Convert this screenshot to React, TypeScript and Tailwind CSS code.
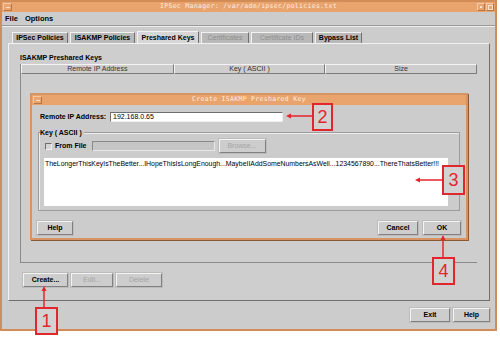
import React from "react";

const btn =
  "flex items-center justify-center h-[14px] bg-[#cdcdcd] border border-t-[#f4f4f4] border-l-[#f4f4f4] border-b-[#808080] border-r-[#808080] shadow-[0_0_0_1px_#bcbcbc] text-[7px] font-bold";

function Button({
  label,
  width,
  disabled,
}: {
  label: string;
  width: string;
  disabled?: boolean;
}) {
  return (
    <div className={`${btn} ${width} ${disabled ? "text-[#a4a4a4] font-normal" : "text-black"}`}>
      {label}
    </div>
  );
}

function Tab({
  label,
  width,
  active,
  disabled,
}: {
  label: string;
  width: string;
  active?: boolean;
  disabled?: boolean;
}) {
  return (
    <div
      className={`flex items-center justify-center text-[7px] font-bold border-t border-l border-r border-t-[#f2f2f2] border-l-[#f2f2f2] border-r-[#6f6f6f] ${width} ${
        active ? "h-[13px] bg-[#d6d6d6] -mb-px" : "h-[11px] bg-[#b9b9b9]"
      } ${disabled ? "text-[#8e8e8e] font-normal" : "text-black"}`}
    >
      {label}
    </div>
  );
}

function Callout({ n, className }: { n: string; className: string }) {
  return (
    <div
      className={`absolute flex items-center justify-center border-2 border-[#e3262d] bg-[#d2d2d2] text-[#e3262d] text-[18px] leading-none ${className}`}
    >
      {n}
    </div>
  );
}

function TitleBar({ title, small }: { title: string; small?: boolean }) {
  return (
    <div className="relative flex items-center justify-center h-[10px] bg-[#e9a36c]">
      <div className="absolute left-[1px] top-[1px] w-[9px] h-[8px] border border-t-[#f6c9a4] border-l-[#f6c9a4] border-b-[#b87544] border-r-[#b87544] flex items-center justify-center">
        <div className="w-[4px] h-px bg-[#f8e2cf]" />
      </div>
      <span className="font-['DejaVu_Sans_Mono',monospace] text-[6.5px] tracking-[0.3px] text-[#fbeee0]">
        {title}
      </span>
      {!small && (
        <div className="absolute right-[1px] top-[1px] flex gap-px">
          <div className="w-[8px] h-[8px] border border-t-[#f6c9a4] border-l-[#f6c9a4] border-b-[#b87544] border-r-[#b87544] flex items-center justify-center">
            <div className="w-[2px] h-[2px] bg-[#f8e2cf]" />
          </div>
          <div className="w-[8px] h-[8px] border border-t-[#f6c9a4] border-l-[#f6c9a4] border-b-[#b87544] border-r-[#b87544] flex items-center justify-center">
            <div className="w-[5px] h-[5px] border border-[#f8e2cf]" />
          </div>
        </div>
      )}
    </div>
  );
}

export default function App() {
  return (
    <div className="relative w-[500px] h-[340px] bg-white font-['Liberation_Sans',Arial,sans-serif] text-black">
      <div className="w-[497px] h-[331px] border-2 border-[#d28c58] bg-[#cccccc] flex flex-col">
        <TitleBar title="IPSec Manager: /var/adm/ipsec/policies.txt" />

        <div className="flex items-center gap-[7px] h-[13px] pl-[3px] text-[7.5px] font-bold">
          <span>File</span>
          <span>Options</span>
        </div>
        <div className="h-px bg-[#9a9a9a]" />
        <div className="h-px bg-[#ededed]" />

        <div className="flex items-end gap-[2px] h-[12px] mt-[4px] pl-[10px]">
          <Tab label="IPSec Policies" width="w-[56px]" />
          <Tab label="ISAKMP Policies" width="w-[65px]" />
          <Tab label="Preshared Keys" width="w-[62px]" active />
          <Tab label="Certificates" width="w-[48px]" disabled />
          <Tab label="Certificate IDs" width="w-[62px]" disabled />
          <Tab label="Bypass List" width="w-[47px]" />
        </div>

        <div className="ml-[6px] w-[482px] h-[258px] bg-[#cecece] border border-t-[#f2f2f2] border-l-[#f2f2f2] border-r-[#6f6f6f] border-b-[#6f6f6f] flex flex-col">
          <div className="h-[10px] mt-[9px] pl-[11px] text-[7px] font-bold leading-[10px]">
            ISAKMP Preshared Keys
          </div>

          <div className="ml-[11px] mt-px w-[457px] h-[199px] border-l border-b border-[#8a8a8a] flex flex-col">
            <div className="flex h-[10px] text-[7px] text-[#333]">
              <div className="w-[153px] flex items-center justify-center border border-t-[#f4f4f4] border-l-[#f4f4f4] border-b-[#7c7c7c] border-r-[#7c7c7c]">
                Remote IP Address
              </div>
              <div className="w-[152px] flex items-center justify-center border border-t-[#f4f4f4] border-l-[#f4f4f4] border-b-[#7c7c7c] border-r-[#7c7c7c]">
                Key ( ASCII )
              </div>
              <div className="w-[152px] flex items-center justify-center border border-t-[#f4f4f4] border-l-[#f4f4f4] border-b-[#7c7c7c] border-r-[#7c7c7c]">
                Size
              </div>
            </div>

            {/* modal dialog */}
            <div className="mt-[19px] ml-[9px] w-[438px] h-[147px] border-2 border-[#d79462] bg-[#cccccc] shadow-[1px_1px_0_#8a5a36] flex flex-col">
              <TitleBar title="Create ISAKMP Preshared Key" small />

              <div className="flex items-center h-[10px] mt-[7px] pl-[8px]">
                <span className="w-[70px] text-[7px] font-bold">Remote IP Address:</span>
                <div className="w-[173px] h-[10px] bg-white border border-t-[#6f6f6f] border-l-[#6f6f6f] border-b-[#eeeeee] border-r-[#eeeeee] text-[7px] leading-[8px] pl-[2px] text-black">
                  192.168.0.65
                </div>
              </div>

              <div className="relative mt-[10px] ml-[6px] w-[422px] h-[79px] border border-[#9c9c9c] shadow-[inset_1px_1px_0_#eeeeee]">
                <span className="absolute -top-[5px] left-[1px] bg-[#cccccc] pr-[2px] text-[7px] font-bold leading-[9px]">
                  Key ( ASCII )
                </span>
                <div className="flex items-center h-[12px] mt-[7px] pl-[6px]">
                  <div className="w-[7px] h-[7px] border border-t-[#6f6f6f] border-l-[#6f6f6f] border-b-[#f0f0f0] border-r-[#f0f0f0] bg-[#d4d4d4]" />
                  <span className="ml-[3px] text-[7px] font-bold">From File</span>
                  <div className="ml-[5px] w-[123px] h-[10px] bg-[#c6c6c6] border border-t-[#8a8a8a] border-l-[#8a8a8a] border-b-[#e8e8e8] border-r-[#e8e8e8]" />
                  <div className="ml-[4px]">
                    <Button label="Browse..." width="w-[47px]" disabled />
                  </div>
                </div>
                <div className="mt-[6px] ml-[5px] w-[404px] h-[48px] bg-white pl-[1px] pt-[1px] text-[6.9px] leading-[9px] text-black whitespace-nowrap overflow-hidden">
                  TheLongerThisKeyIsTheBetter...IHopeThisIsLongEnough...MaybeIIAddSomeNumbersAsWell...1234567890...ThereThatsBetter!!!
                </div>
              </div>

              <div className="flex items-center mt-[10px] px-[5px]">
                <Button label="Help" width="w-[36px]" />
                <div className="ml-auto flex gap-[5px]">
                  <Button label="Cancel" width="w-[40px]" />
                  <Button label="OK" width="w-[38px]" />
                </div>
              </div>
            </div>
          </div>

          <div className="flex gap-[3px] mt-[10px] ml-[14px]">
            <Button label="Create..." width="w-[45px]" />
            <Button label="Edit..." width="w-[42px]" disabled />
            <Button label="Delete" width="w-[46px]" disabled />
          </div>
        </div>

        <div className="flex justify-end gap-[3px] mt-[7px] pr-[5px]">
          <Button label="Exit" width="w-[40px]" />
          <Button label="Help" width="w-[37px]" />
        </div>
      </div>

      {/* callout arrows */}
      <svg className="absolute left-0 top-0 pointer-events-none" width="500" height="340">
        <g stroke="#e3262d" strokeWidth="1.5" fill="#e3262d">
          <line x1="44" y1="307" x2="44" y2="290" />
          <polygon points="44,286 41.5,291 46.5,291" stroke="none" />
          <line x1="312" y1="116" x2="290" y2="116" />
          <polygon points="286,116 291,113.5 291,118.5" stroke="none" />
          <line x1="442" y1="180" x2="419" y2="180" />
          <polygon points="415,180 420,177.5 420,182.5" stroke="none" />
          <line x1="443" y1="257" x2="443" y2="239" />
          <polygon points="443,235 440.5,240 445.5,240" stroke="none" />
        </g>
      </svg>
      <Callout n="1" className="left-[35px] top-[307px] w-[23px] h-[28px]" />
      <Callout n="2" className="left-[312px] top-[103px] w-[21px] h-[28px]" />
      <Callout n="3" className="left-[442px] top-[165px] w-[23px] h-[30px]" />
      <Callout n="4" className="left-[432px] top-[257px] w-[23px] h-[28px]" />
    </div>
  );
}
